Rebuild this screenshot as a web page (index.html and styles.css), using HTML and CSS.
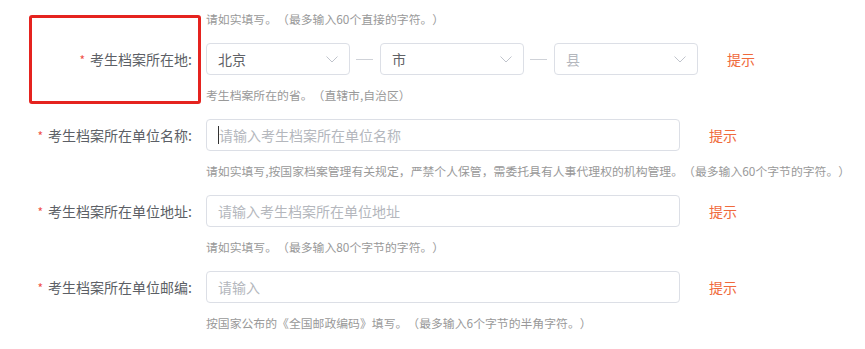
FILE: index.html
```html
<!DOCTYPE html>
<html lang="zh-CN">
<head>
<meta charset="utf-8">
<title>考生档案</title>
<link rel="stylesheet" href="styles.css">
</head>
<body>
<div class="form">
  <div class="item first">
    <div class="hint">请如实填写。（最多输入60个直接的字符。）</div>
  </div>

  <div class="item">
    <div class="row">
      <div class="label"><span class="req">*</span>考生档案所在地:</div>
      <div class="select"><span class="val">北京</span><svg class="chev" width="12" height="7" viewBox="0 0 12 7"><polyline points="0.5,0.5 6,6 11.5,0.5" fill="none" stroke="#c0c4cc" stroke-width="1"/></svg></div>
      <span class="dash"></span>
      <div class="select"><span class="val">市</span><svg class="chev" width="12" height="7" viewBox="0 0 12 7"><polyline points="0.5,0.5 6,6 11.5,0.5" fill="none" stroke="#c0c4cc" stroke-width="1"/></svg></div>
      <span class="dash"></span>
      <div class="select"><span class="ph">县</span><svg class="chev" width="12" height="7" viewBox="0 0 12 7"><polyline points="0.5,0.5 6,6 11.5,0.5" fill="none" stroke="#c0c4cc" stroke-width="1"/></svg></div>
      <span class="tip">提示</span>
    </div>
    <div class="hint">考生档案所在的省。（直辖市,自治区）</div>
  </div>

  <div class="item">
    <div class="row">
      <div class="label"><span class="req">*</span>考生档案所在单位名称:</div>
      <div class="input"><span class="caret"></span><span class="ph">请输入考生档案所在单位名称</span></div>
      <span class="tip">提示</span>
    </div>
    <div class="hint">请如实填写,按国家档案管理有关规定，严禁个人保管，需委托具有人事代理权的机构管理。（最多输入60个字节的字符。）</div>
  </div>

  <div class="item">
    <div class="row">
      <div class="label"><span class="req">*</span>考生档案所在单位地址:</div>
      <div class="input"><span class="ph">请输入考生档案所在单位地址</span></div>
      <span class="tip">提示</span>
    </div>
    <div class="hint">请如实填写。（最多输入80个字节的字符。）</div>
  </div>

  <div class="item">
    <div class="row">
      <div class="label"><span class="req">*</span>考生档案所在单位邮编:</div>
      <div class="input"><span class="ph">请输入</span></div>
      <span class="tip">提示</span>
    </div>
    <div class="hint">按国家公布的《全国邮政编码》填写。（最多输入6个字节的半角字符。）</div>
  </div>

  <div class="mark"></div>
</div>
</body>
</html>
```

FILE: styles.css
```css
html, body {
  margin: 0;
  padding: 0;
  background: #ffffff;
}

body {
  font-family: "Noto Sans CJK SC", "Noto Sans", sans-serif;
  color: #606266;
  text-spacing-trim: space-all;
}

.form {
  position: relative;
  width: 865px;
  height: 349px;
  overflow: hidden;
}

.item {
  margin-bottom: 15px;
}

.item.first .hint {
  margin-top: 10px;
}

.row {
  display: flex;
  align-items: center;
  height: 32px;
}

.label {
  box-sizing: border-box;
  width: 206px;
  padding-right: 14px;
  text-align: right;
  font-size: 14px;
  line-height: 32px;
  color: #5c5f66;
  white-space: nowrap;
}

.req {
  color: #f0524a;
  font-size: 12px;
  margin-right: 5px;
  position: relative;
  top: 0;
}

.select,
.input {
  box-sizing: border-box;
  height: 32px;
  border: 1px solid #dcdfe6;
  border-radius: 4px;
  display: flex;
  align-items: center;
  font-size: 14px;
  background: #fff;
}

.select {
  width: 144px;
  padding: 0 11px 0 11px;
  justify-content: space-between;
}

.input {
  width: 474px;
  padding-left: 11px;
}

.val {
  color: #606266;
}

.ph {
  color: #b4b7bd;
}

.chev {
  display: block;
}

.caret {
  display: inline-block;
  width: 1px;
  height: 18px;
  background: #333;
}

.dash {
  display: block;
  width: 17px;
  height: 1px;
  background: #cfd2d8;
  margin: 0 7px 0 6px;
}

.tip {
  margin-left: 29px;
  font-size: 14px;
  color: #f06a3c;
  line-height: 32px;
}

.hint {
  margin-top: 11px;
  margin-left: 206px;
  font-size: 11.85px;
  line-height: 18px;
  color: #999;
  white-space: nowrap;
}

.mark {
  position: absolute;
  left: 29px;
  top: 15px;
  width: 172px;
  height: 89px;
  box-sizing: border-box;
  border: 3px solid #e5231f;
  border-radius: 3px;
}
```
